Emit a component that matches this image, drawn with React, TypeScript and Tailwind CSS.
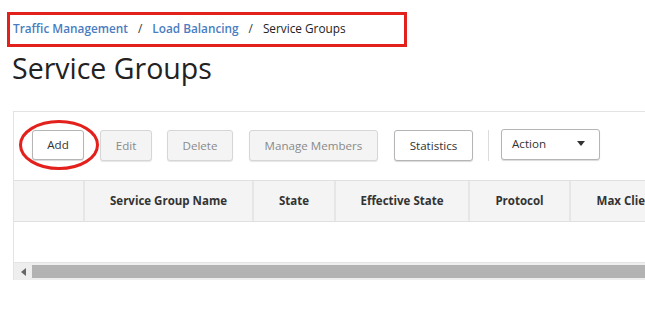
import React from "react";

const cols = [
  { w: "w-[69px]", label: "" },
  { w: "w-[169px]", label: "Service Group Name" },
  { w: "w-[82px]", label: "State" },
  { w: "w-[134px]", label: "Effective State" },
  { w: "w-[101px]", label: "Protocol" },
  { w: "w-[120px]", label: "Max Clients" },
];

export default function App() {
  return (
    <div className="relative w-[645px] h-[315px] overflow-hidden bg-white font-['Open_Sans',sans-serif] text-[#222]">
      <div className="pt-[12px] pl-[7px]">
        <div className="flex h-[35px] w-[400px] items-center border-[3px] border-[#e3211c] pl-[3px] pb-[1px] text-[11.8px]">
          <span className="font-semibold text-[#4a7cc1]">Traffic Management</span>
          <span className="mx-[10px] text-[#333]">/</span>
          <span className="font-semibold text-[#4a7cc1]">Load Balancing</span>
          <span className="mx-[10px] text-[#333]">/</span>
          <span className="text-[#222]">Service Groups</span>
        </div>
      </div>
      <h1 className="ml-[12px] mt-[1px] text-[28.5px] leading-[40px] font-normal text-[#222]">Service Groups</h1>
      <div className="ml-[13px] mt-[23px] border-l border-t border-[#e3e3e3]">
        <div className="flex h-[68px] items-start pl-[18px] pt-[18px] text-[11.6px]">
          <button className="h-[30px] w-[52px] rounded-[3px] border border-[#b5b5b5] bg-white text-[#333] shadow-[0_1px_1px_rgba(0,0,0,0.15)]">Add</button>
          <button className="ml-[16px] h-[31px] w-[52px] rounded-[3px] border border-[#d6d6d6] bg-[#f4f4f4] text-[#8a8a8a] shadow-[0_1px_1px_rgba(0,0,0,0.1)]">Edit</button>
          <button className="ml-[15px] h-[31px] w-[66px] rounded-[3px] border border-[#d6d6d6] bg-[#f4f4f4] text-[#8a8a8a] shadow-[0_1px_1px_rgba(0,0,0,0.1)]">Delete</button>
          <button className="ml-[16px] h-[31px] w-[129px] rounded-[3px] border border-[#d6d6d6] bg-[#f4f4f4] text-[#8a8a8a] shadow-[0_1px_1px_rgba(0,0,0,0.1)]">Manage Members</button>
          <button className="ml-[16px] h-[31px] w-[79px] rounded-[3px] border border-[#b5b5b5] bg-white text-[#333] shadow-[0_1px_1px_rgba(0,0,0,0.15)]">Statistics</button>
          <div className="ml-[15px] h-[31px] w-px bg-[#dcdcdc]" />
          <div className="ml-[12px] -mt-[1px] flex h-[31px] w-[99px] items-center justify-between rounded-[3px] border border-[#b5b5b5] bg-white pl-[10px] pr-[14px] pb-[2px] text-[#333] shadow-[0_1px_1px_rgba(0,0,0,0.15)]">
            <span>Action</span>
            <svg width="8" height="5" viewBox="0 0 8 5"><path d="M0 0h8L4 5z" fill="#333" /></svg>
          </div>
        </div>
        <div className="flex h-[42px] border-t border-b border-[#e0e0e0] bg-[#f4f4f4] text-[11.5px] font-bold text-[#333]">
          {cols.map((c, i) => (
            <div key={i} className={`${c.w} shrink-0 flex items-center justify-center ${i > 0 ? "border-l-2 border-[#e6e6e6]" : ""}`}>
              <span className="whitespace-nowrap">{c.label}</span>
            </div>
          ))}
        </div>
        <div className="h-[41px] bg-white border-b border-[#e3e3e3]" />
        <div className="flex h-[17px] items-center bg-[#eeeeee]">
          <div className="flex w-[18px] items-center justify-center">
            <svg width="5" height="8" viewBox="0 0 5 8"><path d="M5 0v8L0 4z" fill="#666" /></svg>
          </div>
          <div className="h-[13px] flex-1 bg-[#b3b3b3]" />
        </div>
      </div>
      <svg className="absolute left-[18px] top-[119px]" width="82" height="52" viewBox="0 0 82 52">
        <ellipse cx="41" cy="26" rx="38.5" ry="23.5" fill="none" stroke="#e3211c" strokeWidth="3" />
      </svg>
    </div>
  );
}
